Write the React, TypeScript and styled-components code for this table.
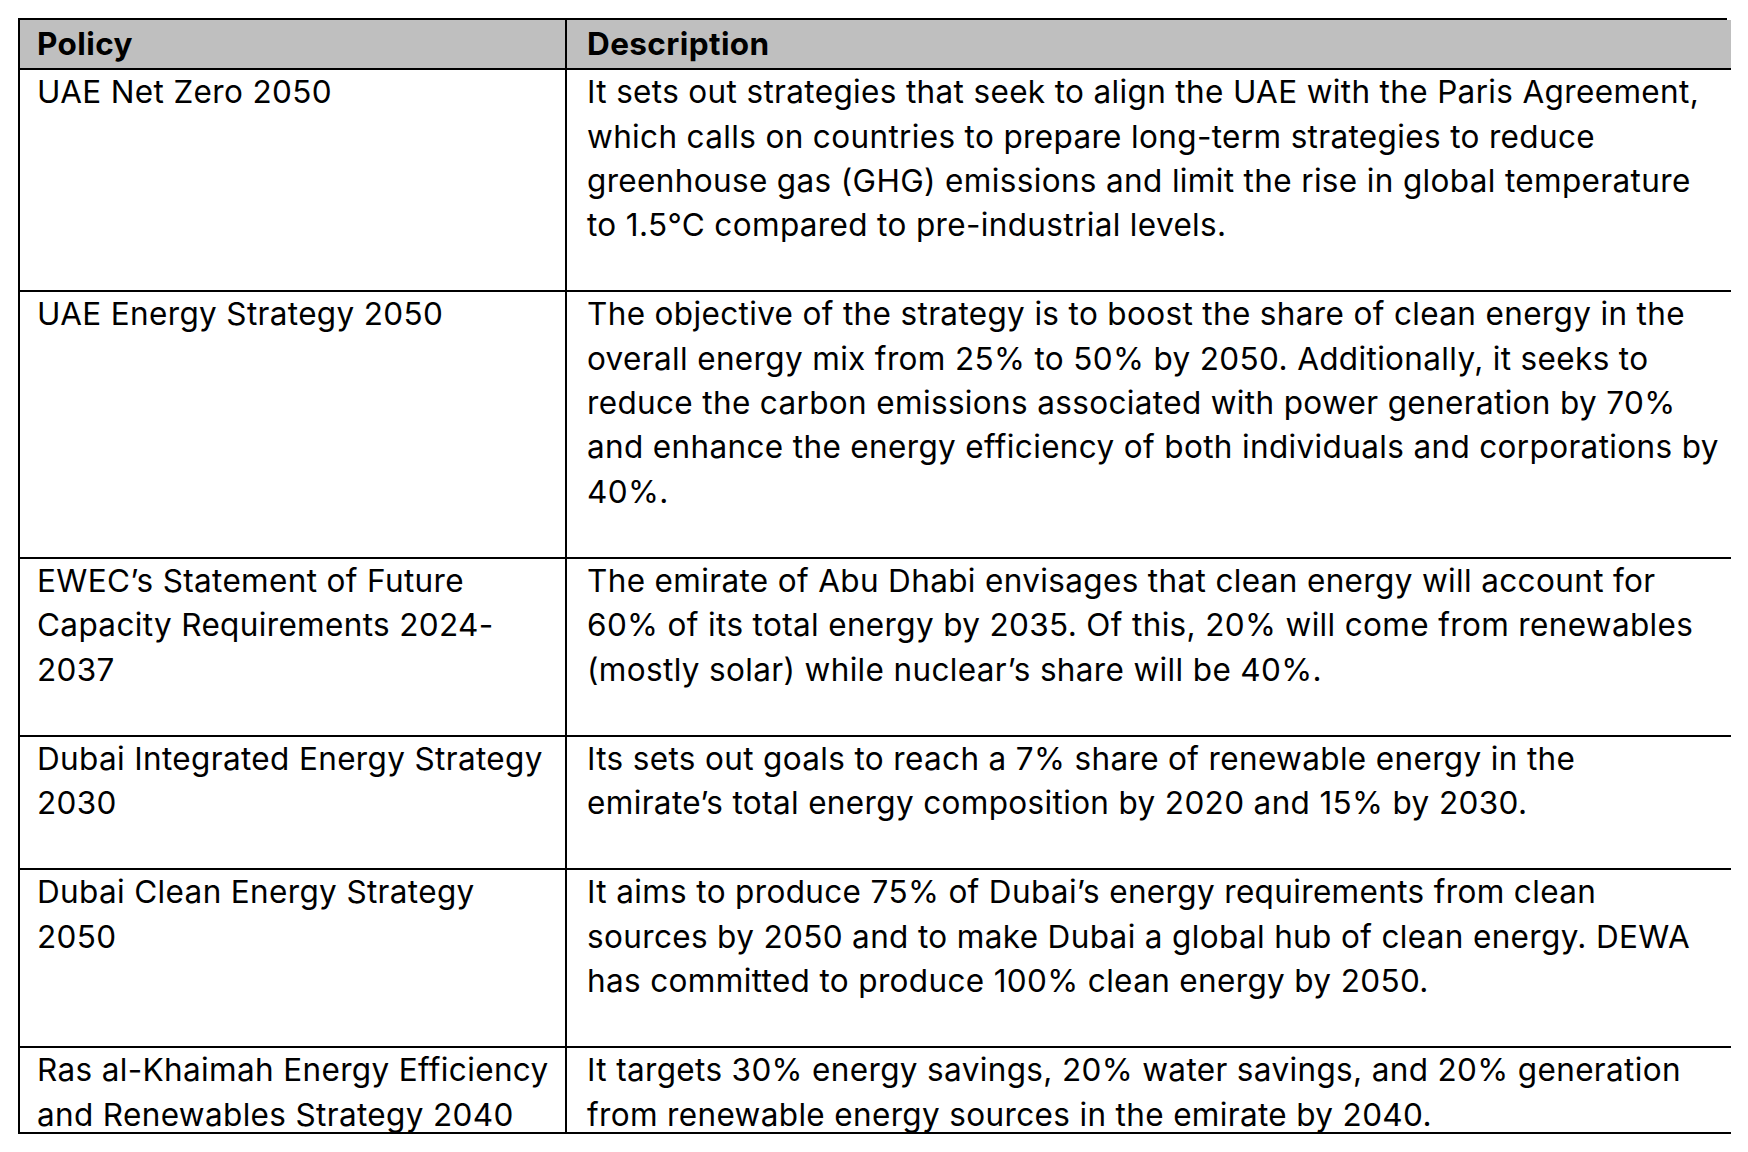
import React from "react";
import styled, { createGlobalStyle } from "styled-components";

const Global = createGlobalStyle`
  html, body { margin: 0; padding: 0; background: #ffffff; }
  body { font-family: Inter, Roboto, "Noto Sans", sans-serif; color: #000; }
`;

const Page = styled.div`
  padding: 18px 0 0 18px;
  width: 1748px;
  height: 1152px;
  box-sizing: border-box;
  overflow: hidden;
`;

const Table = styled.div`
  display: grid;
  grid-template-columns: 547px 1fr;
  width: 1709px;
  box-sizing: border-box;
  border: 2px solid #000;
  border-bottom: none;
`;

const Cell = styled.div<{ $first?: boolean; $head?: boolean; $extra?: boolean; $clip?: boolean }>`
  box-sizing: border-box;
  padding: ${(p) => (p.$head ? "2px" : "0")} 12px ${(p) => (p.$extra ? "43px" : p.$head ? "2px" : "0")}
    ${(p) => (p.$first ? "17px" : "20px")};
  height: ${(p) => (p.$clip ? "86px" : "auto")};
  overflow: visible;
  border-right: ${(p) => (p.$first ? "2px solid #000" : "none")};
  border-bottom: 2px solid #000;
  background: ${(p) => (p.$head ? "#bfbfbf" : "#fff")};
  font-size: 31.5px;
  line-height: 44.3px;
  font-weight: ${(p) => (p.$head ? 700 : 400)};
  letter-spacing: ${(p) => (p.$head ? "0.4px" : "0.35px")};
`;

const Line = styled.span`
  display: block;
  white-space: nowrap;
`;

type Row = { policy: string[]; desc: string[] };

const rows: Row[] = [
  {
    policy: ["UAE Net Zero 2050"],
    desc: [
      "It sets out strategies that seek to align the UAE with the Paris Agreement,",
      "which calls on countries to prepare long-term strategies to reduce",
      "greenhouse gas (GHG) emissions and limit the rise in global temperature",
      "to 1.5°C compared to pre-industrial levels.",
    ],
  },
  {
    policy: ["UAE Energy Strategy 2050"],
    desc: [
      "The objective of the strategy is to boost the share of clean energy in the",
      "overall energy mix from 25% to 50% by 2050. Additionally, it seeks to",
      "reduce the carbon emissions associated with power generation by 70%",
      "and enhance the energy efficiency of both individuals and corporations by",
      "40%.",
    ],
  },
  {
    policy: ["EWEC’s Statement of Future", "Capacity Requirements 2024-", "2037"],
    desc: [
      "The emirate of Abu Dhabi envisages that clean energy will account for",
      "60% of its total energy by 2035. Of this, 20% will come from renewables",
      "(mostly solar) while nuclear’s share will be 40%.",
    ],
  },
  {
    policy: ["Dubai Integrated Energy Strategy", "2030"],
    desc: [
      "Its sets out goals to reach a 7% share of renewable energy in the",
      "emirate’s total energy composition by 2020 and 15% by 2030.",
    ],
  },
  {
    policy: ["Dubai Clean Energy Strategy", "2050"],
    desc: [
      "It aims to produce 75% of Dubai’s energy requirements from clean",
      "sources by 2050 and to make Dubai a global hub of clean energy. DEWA",
      "has committed to produce 100% clean energy by 2050.",
    ],
  },
  {
    policy: ["Ras al-Khaimah Energy Efficiency", "and Renewables Strategy 2040"],
    desc: [
      "It targets 30% energy savings, 20% water savings, and 20% generation",
      "from renewable energy sources in the emirate by 2040.",
    ],
  },
];

export default function App() {
  return (
    <Page>
      <Global />
      <Table>
        <Cell $first $head>
          <Line>Policy</Line>
        </Cell>
        <Cell $head>
          <Line>Description</Line>
        </Cell>
        {rows.map((r, i) => {
          const last = i === rows.length - 1;
          return (
            <React.Fragment key={i}>
              <Cell $first $extra={!last} $clip={last}>
                {r.policy.map((l, j) => (
                  <Line key={j}>{l}</Line>
                ))}
              </Cell>
              <Cell $extra={!last} $clip={last}>
                {r.desc.map((l, j) => (
                  <Line key={j}>{l}</Line>
                ))}
              </Cell>
            </React.Fragment>
          );
        })}
      </Table>
    </Page>
  );
}
